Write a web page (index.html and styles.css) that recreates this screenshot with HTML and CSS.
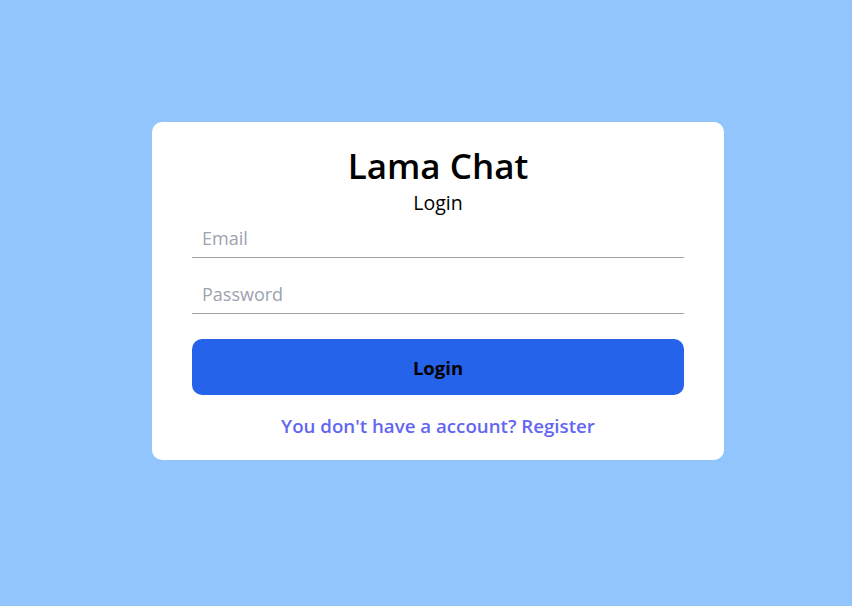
FILE: index.html
```html
<!DOCTYPE html>
<html lang="en">
<head>
<meta charset="utf-8">
<title>Lama Chat - Login</title>
<link rel="stylesheet" href="styles.css">
</head>
<body>
<div class="form-container">
  <div class="form-wrapper">
    <span class="logo">Lama Chat</span>
    <span class="title">Login</span>
    <form class="form">
      <input class="field" type="email" placeholder="Email">
      <input class="field" type="password" placeholder="Password">
      <button class="btn" type="button">Login</button>
    </form>
    <p class="hint">You don't have a account? Register</p>
  </div>
</div>
</body>
</html>
```
FILE: styles.css
```css
* { box-sizing: border-box; }
html, body { margin: 0; height: 100%; }
body {
  font-family: "Open Sans", "Noto Sans", sans-serif;
  background: #93c5fd;
}
.form-container {
  height: 100%;
  padding: 0 0 24px 24px;
  display: flex;
  align-items: center;
  justify-content: center;
}
.form-wrapper {
  width: 572px;
  background: #fff;
  border-radius: 10px;
  padding: 20px 40px 21px;
  display: flex;
  flex-direction: column;
  align-items: center;
}
.logo {
  font-size: 35px;
  font-weight: 600;
  color: #000;
  line-height: 47px;
}
.title {
  font-size: 19.5px;
  color: #000;
  line-height: 28px;
}
.form {
  width: 100%;
  margin-top: 3px;
  display: flex;
  flex-direction: column;
  gap: 18px;
}
.field {
  width: 100%;
  border: none;
  border-bottom: 1px solid #a3a3a3;
  padding: 7px 10px;
  font-family: inherit;
  font-size: 18px;
  line-height: 23px;
  outline: none;
  color: #000;
}
.field::placeholder { color: #9ca3af; }
.btn {
  margin-top: 7px;
  height: 56px;
  border: none;
  border-radius: 10px;
  background: #2563eb;
  color: #000;
  font-family: inherit;
  font-size: 18.5px;
  font-weight: 700;
}
.hint {
  margin: 18px 0 0;
  font-size: 18.7px;
  font-weight: 600;
  color: #6366f1;
  line-height: 26px;
}
```
